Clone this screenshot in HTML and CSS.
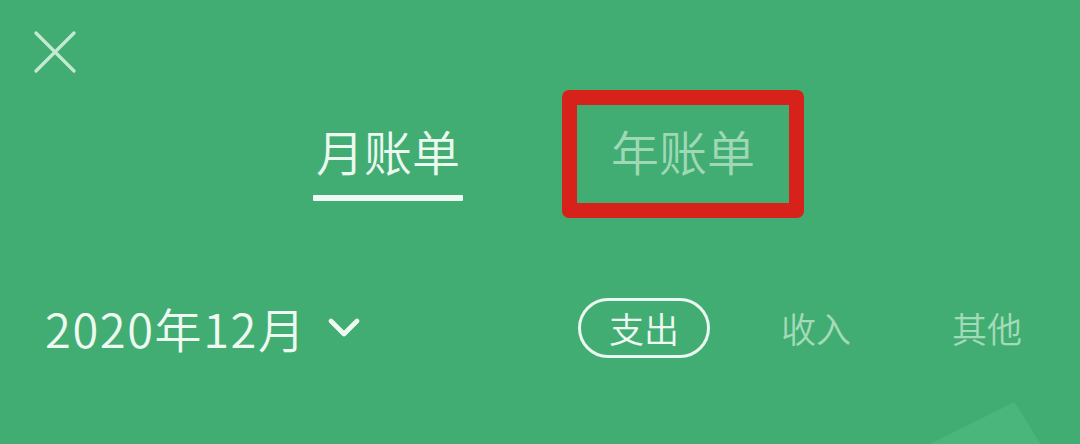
FILE: index.html
```html
<!DOCTYPE html>
<html lang="zh-CN">

<head>
    <meta charset="UTF-8">
    <title>账单</title>
    <link rel="stylesheet" href="styles.css">
</head>

<body>
    <div class="page">
        <a class="close" href="#">
            <svg width="42" height="42" viewBox="0 0 42 42">
                <path d="M2 2 L40 40 M40 2 L2 40" stroke="#c4ead3" stroke-width="3.2" stroke-linecap="round" fill="none"/>
            </svg>
        </a>

        <ul class="tabs">
            <li class="tab select">
                <span class="tab-name">月账单</span>
                <i class="tab-line"></i>
            </li>
            <li class="tab marked">
                <span class="tab-name">年账单</span>
            </li>
        </ul>

        <div class="filters">
            <div class="month">
                <span class="month-text">2020年12月</span>
                <svg class="arrow" width="32" height="22" viewBox="0 0 32 22">
                    <path d="M3 4 L16 17 L29 4" stroke="#eef9f2" stroke-width="4.6" stroke-linecap="round" stroke-linejoin="round" fill="none"/>
                </svg>
            </div>
            <ul class="types">
                <li class="type current">支出</li>
                <li class="type income">收入</li>
                <li class="type other">其他</li>
            </ul>
        </div>
    </div>
</body>

</html>
```

FILE: styles.css
```css
* {
    margin: 0;
    padding: 0;
    list-style: none;
    box-sizing: border-box;
}

body {
    background: #42ad72;
    font-family: "Noto Sans CJK SC", "Noto Sans", sans-serif;
    font-weight: 350;
    color: #eaf8ef;
    overflow: hidden;
}

.page {
    position: relative;
    width: 1080px;
    height: 444px;
    overflow: hidden;
}

/* 右下角的浅色三角 */
.page::after {
    content: "";
    position: absolute;
    left: 930px;
    top: 402px;
    width: 130px;
    height: 42px;
    background: #4ab67b;
    clip-path: polygon(0 100%, 65% 0, 85% 100%);
}

.close {
    display: block;
    width: 42px;
    height: 42px;
    margin: 31px 0 0 34px;
}

.close svg {
    display: block;
}

.tabs {
    display: flex;
    align-items: flex-start;
    gap: 99px;
    margin-top: 17px;
    padding-left: 313px;
}

.tab {
    display: flex;
    flex-direction: column;
    align-items: center;
}

.tab-name {
    font-size: 48px;
    line-height: 48px;
}

.select {
    width: 150px;
    padding-top: 36px;
}

.select .tab-name {
    color: #ecf9f1;
}

.tab-line {
    display: block;
    width: 150px;
    height: 6px;
    margin-top: 21px;
    background: #edf9f2;
    border-radius: 1px;
}

/* 标注用的红框 */
.marked {
    width: 242px;
    height: 128px;
    padding-top: 21px;
    border: 15px solid #d7221c;
    border-radius: 7px;
}

.marked .tab-name {
    color: #9fd8b6;
}

.filters {
    display: flex;
    align-items: center;
    height: 60px;
    margin-top: 80px;
    padding-left: 45px;
}

.month {
    display: flex;
    align-items: center;
}

.month-text {
    font-size: 47px;
    line-height: 60px;
    color: #eef9f2;
    letter-spacing: 1.6px;
}

.arrow {
    display: block;
    margin-left: 21px;
}

.types {
    display: flex;
    align-items: center;
    margin-left: auto;
    padding-right: 58px;
}

.type {
    font-size: 35px;
    line-height: 60px;
    color: #a3dbba;
}

.current {
    width: 132px;
    height: 60px;
    margin-right: 2px;
    line-height: 54px;
    text-align: center;
    border: 3px solid #eaf8ef;
    border-radius: 30px;
    color: #eef9f2;
    font-size: 35px;
}

.income {
    margin-left: 69px;
}

.other {
    margin-left: 101px;
}
```
